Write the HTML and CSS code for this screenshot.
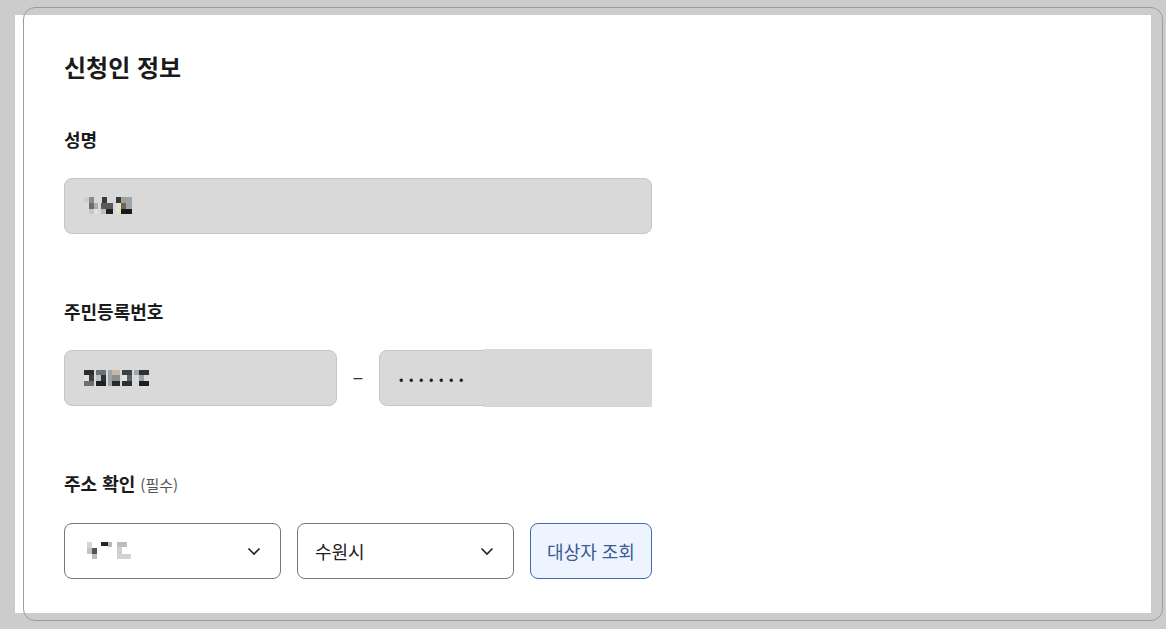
FILE: index.html
```html
<!DOCTYPE html>
<html lang="ko">
<head>
<meta charset="utf-8">
<title>신청인 정보</title>
<link rel="stylesheet" href="styles.css">
</head>
<body>
<div class="card">
  <h1 class="title">신청인 정보</h1>

  <section class="field field-name">
    <div class="label">성명</div>
    <div class="input input-wide">
      <svg class="mosaic" width="50" height="18" viewBox="0 0 50 18">
        <rect x="0" y="0" width="5" height="6" fill="#cfcfcf"/>
        <rect x="0" y="6" width="5" height="6" fill="#e3ddd0"/>
        <rect x="5" y="0" width="5" height="6" fill="#8a8a8a"/>
        <rect x="5" y="6" width="5" height="6" fill="#6b6b6b"/>
        <rect x="5" y="12" width="5" height="5" fill="#c4c8cc"/>
        <rect x="10" y="6" width="4" height="6" fill="#a9b0b5"/>
        <rect x="10" y="12" width="4" height="5" fill="#dfe3e6"/>
        <rect x="18" y="0" width="5" height="6" fill="#3c3c3c"/>
        <rect x="17" y="6" width="12" height="6" fill="#5a5a5a"/>
        <rect x="17" y="12" width="5" height="5" fill="#b8bec2"/>
        <rect x="22" y="12" width="7" height="5" fill="#1f1f1f"/>
        <rect x="32" y="0" width="5" height="6" fill="#2d3a40"/>
        <rect x="37" y="0" width="5" height="6" fill="#a89e8a"/>
        <rect x="32" y="6" width="5" height="6" fill="#e8e0cc"/>
        <rect x="37" y="6" width="5" height="6" fill="#6d6552"/>
        <rect x="42" y="0" width="6" height="12" fill="#9aa4aa"/>
        <rect x="32" y="12" width="5" height="5" fill="#e8e0cc"/>
        <rect x="37" y="12" width="11" height="5" fill="#161b1e"/>
      </svg>
    </div>
  </section>

  <section class="field">
    <div class="label">주민등록번호</div>
    <div class="row-rrn">
      <div class="input input-half">
        <svg class="mosaic" width="66" height="18" viewBox="0 0 66 18">
          <rect x="0" y="1" width="10" height="5" fill="#2a2f33"/>
          <rect x="0" y="6" width="5" height="6" fill="#e7e0cf"/>
          <rect x="5" y="6" width="5" height="6" fill="#3b4145"/>
          <rect x="0" y="12" width="10" height="5" fill="#6d7072"/>
          <rect x="12" y="1" width="10" height="5" fill="#6a7276"/>
          <rect x="12" y="6" width="5" height="6" fill="#bcc3c8"/>
          <rect x="17" y="6" width="5" height="6" fill="#2c3236"/>
          <rect x="12" y="12" width="10" height="5" fill="#1d2226"/>
          <rect x="24" y="1" width="4" height="16" fill="#9da3a7"/>
          <rect x="28" y="1" width="8" height="5" fill="#c8b9a5"/>
          <rect x="28" y="6" width="8" height="6" fill="#8e8e8e"/>
          <rect x="28" y="12" width="8" height="5" fill="#25292c"/>
          <rect x="38" y="1" width="10" height="5" fill="#3c4347"/>
          <rect x="38" y="6" width="5" height="6" fill="#dfe3e6"/>
          <rect x="43" y="6" width="5" height="6" fill="#5b6266"/>
          <rect x="38" y="12" width="10" height="5" fill="#2b3034"/>
          <rect x="50" y="1" width="5" height="5" fill="#9ca6ae"/>
          <rect x="55" y="1" width="10" height="5" fill="#2b3236"/>
          <rect x="55" y="6" width="5" height="6" fill="#97a1a8"/>
          <rect x="55" y="12" width="10" height="5" fill="#162026"/>
        </svg>
      </div>
      <div class="dash">–</div>
      <div class="input input-half input-masked">
        <span class="dots">•••••••</span>
      </div>
    </div>
  </section>

  <section class="field field-addr">
    <div class="label">주소 확인 <span class="hint">(필수)</span></div>
    <div class="row-addr">
      <div class="select">
        <svg class="mosaic" width="46" height="18" viewBox="0 0 46 18">
          <rect x="0" y="0" width="5" height="6" fill="#d6d6d6"/>
          <rect x="0" y="6" width="5" height="6" fill="#c3c3c3"/>
          <rect x="5" y="6" width="5" height="6" fill="#555"/>
          <rect x="5" y="12" width="5" height="5" fill="#bdbdbd"/>
          <rect x="14" y="0" width="7" height="4" fill="#2b2322"/>
          <rect x="21" y="0" width="4" height="5" fill="#b8b8b8"/>
          <rect x="30" y="0" width="10" height="5" fill="#bdbdbd"/>
          <rect x="30" y="5" width="5" height="7" fill="#cfcfcf"/>
          <rect x="30" y="12" width="14" height="5" fill="#d2d2d2"/>
        </svg>
        <svg class="chev" width="14" height="9" viewBox="0 0 14 9"><path d="M1.5 1.5 L7 7 L12.5 1.5" fill="none" stroke="#222" stroke-width="1.6"/></svg>
      </div>
      <div class="select">
        <span class="sel-text">수원시</span>
        <svg class="chev" width="14" height="9" viewBox="0 0 14 9"><path d="M1.5 1.5 L7 7 L12.5 1.5" fill="none" stroke="#222" stroke-width="1.6"/></svg>
      </div>
      <button class="btn">대상자 조회</button>
    </div>
  </section>
</div>
<div class="frame"></div>
</body>
</html>
```

FILE: styles.css
```css
* { box-sizing: border-box; }

html, body {
  margin: 0;
  padding: 0;
}

body {
  background: #cccccc;
  padding: 15px;
  font-family: "Noto Sans CJK KR", "Noto Sans", sans-serif;
  color: #1b1b1b;
  position: relative;
  height: 629px;
  overflow: hidden;
}

.card {
  width: 1136px;
  height: 598px;
  background: #ffffff;
  padding: 36px 0 0 49px;
}

.frame {
  position: absolute;
  left: 23px;
  top: 7px;
  width: 1140px;
  height: 614px;
  border: 1px solid #9c9c9c;
  border-radius: 12px;
  pointer-events: none;
}

.title {
  margin: 0 0 44px;
  font-size: 24px;
  line-height: 32px;
  font-weight: 700;
  color: #1a1a1a;
}

.field {
  margin-bottom: 65px;
}

.label {
  font-size: 18px;
  line-height: 24px;
  height: 24px;
  font-weight: 700;
  color: #1a1a1a;
  margin-bottom: 27px;
}

.field-addr .label {
  margin-bottom: 28px;
}

.hint {
  font-size: 15px;
  line-height: 1;
  font-weight: 400;
  color: #555;
}

.input {
  height: 56px;
  background: #d9d9d9;
  border: 1px solid #c5c5c5;
  border-radius: 8px;
  display: flex;
  align-items: center;
  padding-left: 19px;
  position: relative;
}

.input-wide {
  width: 588px;
}

.input-half {
  width: 273px;
}

.input-masked::after {
  content: "";
  position: absolute;
  left: 103px;
  right: -1px;
  top: -2px;
  bottom: -2px;
  background: #d8d8d8;
}

.dots {
  position: relative;
  z-index: 1;
  font-size: 13px;
  letter-spacing: 5.6px;
  color: #222;
}

.row-rrn {
  display: flex;
  align-items: center;
  width: 588px;
}

.dash {
  flex: 1;
  text-align: center;
  font-size: 16px;
  color: #333;
  font-family: "Liberation Sans", sans-serif;
}

.row-addr {
  display: flex;
  gap: 16px;
  width: 588px;
}

.select {
  width: 217px;
  height: 56px;
  border: 1px solid #767676;
  border-radius: 8px;
  display: flex;
  align-items: center;
  justify-content: space-between;
  padding: 0 19px 0 17px;
  background: #fff;
}

.select:first-child {
  padding-left: 22px;
}

.sel-text {
  font-size: 18px;
  color: #222;
}

.chev {
  display: block;
}

.btn {
  width: 122px;
  height: 56px;
  border: 1px solid #3f6ab0;
  border-radius: 8px;
  background: #edf4ff;
  color: #3b5b92;
  font-family: inherit;
  font-size: 18px;
  padding: 0;
}
```
